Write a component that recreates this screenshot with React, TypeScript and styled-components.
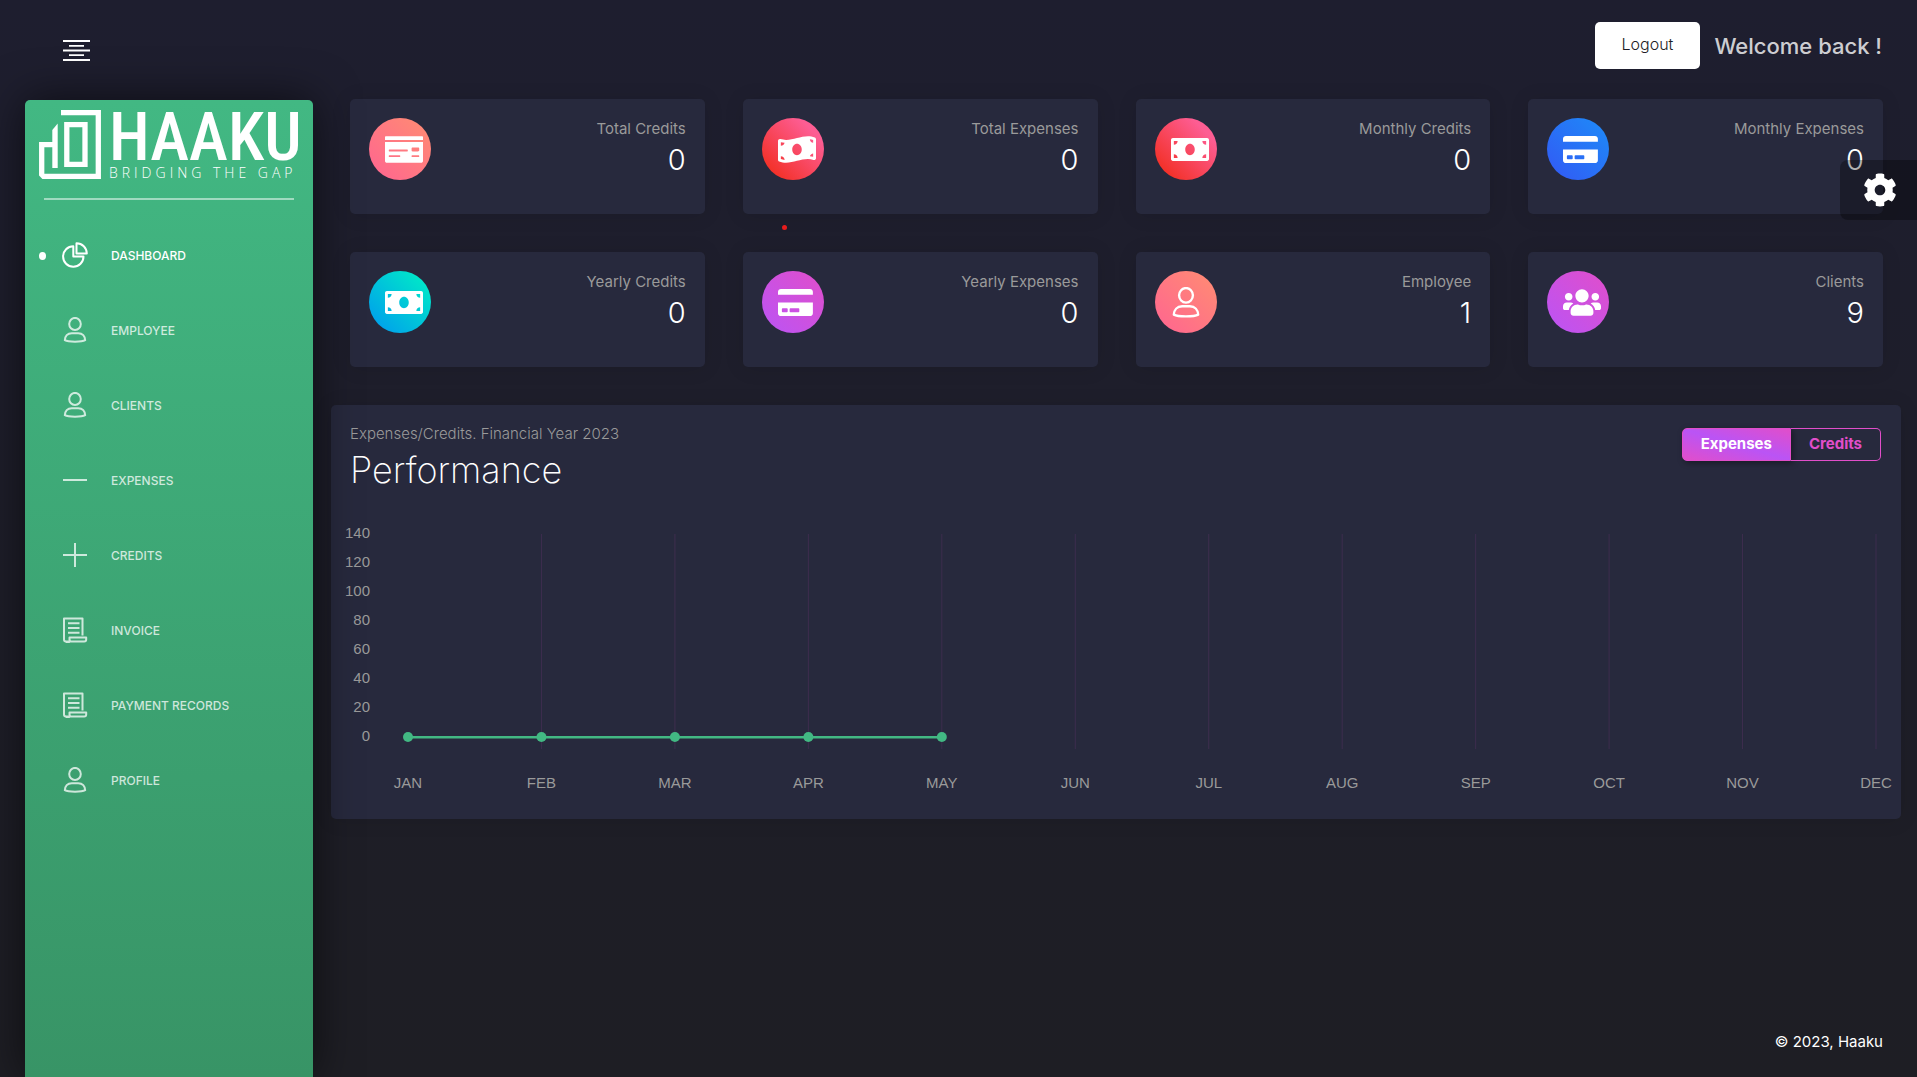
import React, { useState } from "react";
import styled, { createGlobalStyle, css } from "styled-components";
import { FaCog, FaCreditCard, FaMoneyBill, FaMoneyBillWave, FaMoneyCheck, FaUsers } from "react-icons/fa";

const GlobalStyle = createGlobalStyle`
  *, *::before, *::after { box-sizing: border-box; }
  body {
    margin: 0;
    background: #1e1e24;
    color: #fff;
    font-family: Inter, "Open Sans", sans-serif;
    font-size: 15px;
    line-height: 20px;
  }
  button { font-family: inherit; cursor: pointer; }
`;

const Page = styled.div`
  position: relative;
  display: flex;
  flex-direction: column;
  min-height: 100vh;
  background: linear-gradient(#1e1e2f, #1e1e24);
  overflow: hidden;
`;

const Header = styled.header`
  display: flex;
  align-items: flex-start;
  justify-content: space-between;
  height: 100px;
  padding: 22px 35px 0 63px;
`;

const MenuButton = styled.button`
  display: flex;
  margin-top: 18px;
  padding: 0;
  border: 0;
  background: none;
  color: #fff;
`;

const Account = styled.div`
  display: flex;
  align-items: flex-start;
  gap: 14px;
`;

const Logout = styled.button`
  height: 47px;
  padding: 0 27px 4px;
  border: 0;
  border-radius: 5px;
  background: #fff;
  color: #1d1d26;
  font-size: 16px;
  font-weight: 300;
`;

const Welcome = styled.p`
  margin: 0;
  color: rgba(255, 255, 255, 0.8);
  font-size: 22px;
  font-weight: 500;
  line-height: 48px;
`;

const Body = styled.div`
  display: flex;
  flex: 1;
`;

const Sidebar = styled.aside`
  z-index: 1;
  flex: none;
  width: 288px;
  margin-left: 25px;
  border-radius: 5px 5px 0 0;
  background: linear-gradient(#42b883, #389466);
  box-shadow: 0 0 45px rgba(0, 0, 0, 0.6);
`;

const Brand = styled.a`
  display: flex;
  gap: 8px;
  padding: 10px 14px 17px;
  color: #fff;
  text-decoration: none;
  white-space: nowrap;
  svg { flex: none; }
`;

const BrandText = styled.span`
  display: flex;
  flex-direction: column;
`;

const BrandName = styled.span`
  font-family: "Roboto Condensed", "Liberation Sans Narrow", Roboto, sans-serif;
  font-size: 66px;
  font-weight: 500;
  line-height: 55px;
`;

const Tagline = styled.span`
  font-family: "Open Sans", sans-serif;
  font-size: 14px;
  font-weight: 300;
  line-height: 16px;
  letter-spacing: 4px;
`;

const Divider = styled.hr`
  height: 2px;
  margin: 0 19px;
  border: 0;
  background: rgba(255, 255, 255, 0.5);
`;

const NavList = styled.ul`
  margin: 0;
  padding: 18px 0 0;
  list-style: none;
`;

const NavLink = styled.a<{ $active?: boolean }>`
  display: grid;
  grid-template-columns: 8px 26px 1fr;
  align-items: center;
  column-gap: 15px;
  height: 75px;
  padding-left: 14px;
  color: rgba(255, 255, 255, ${(p) => (p.$active ? 1 : 0.75)});
  font-size: 12px;
  font-weight: 500;
  text-decoration: none;
  &::before {
    content: "";
    width: 7px;
    height: 8px;
    border-radius: 50%;
    background: ${(p) => (p.$active ? "#fff" : "transparent")};
  }
  svg { margin-bottom: 2px; }
  span { padding-left: 8px; }
`;

const Main = styled.main`
  display: flex;
  flex: 1;
  flex-direction: column;
  min-width: 0;
  padding: 0 16px 0 18px;
`;

const Stats = styled.section`
  display: grid;
  grid-template-columns: repeat(4, 1fr);
  gap: 38px;
  padding: 0 18px 0 19px;
  margin-top: -1px;
`;

const surface = css`
  border-radius: 5px;
  background: #27293d;
  box-shadow: 0 1px 20px rgba(0, 0, 0, 0.1);
`;

const StatCard = styled.article`
  ${surface}
  display: flex;
  justify-content: space-between;
  height: 115px;
  padding: 19px;
`;

const tones = {
  coral: "#ff6491, #ff8d72",
  red: "#f12711, #fd5d93 80%",
  blue: "#3358f4, #1d8cf8",
  teal: "#0098f0, #00f2c3",
  purple: "#ba54f5, #e14eca",
};

const Badge = styled.span<{ $tone: keyof typeof tones; $center?: boolean }>`
  display: flex;
  align-items: center;
  justify-content: ${(p) => (p.$center ? "center" : "flex-start")};
  width: 62px;
  height: 62px;
  padding-left: ${(p) => (p.$center ? 0 : 16)}px;
  border-radius: 50%;
  background: linear-gradient(to top right, ${(p) => tones[p.$tone]});
  color: #fff;
  svg { flex: none; width: 38px; height: 31px; }
`;

const Figures = styled.div`
  padding-top: 1px;
  text-align: right;
`;

const StatLabel = styled.p`
  margin: 0;
  color: #9a9a9a;
`;

const StatValue = styled.p`
  margin: 5px 0 0;
  font-size: 29px;
  font-weight: 300;
  line-height: 32px;
`;

const Panel = styled.section`
  ${surface}
  margin-top: 38px;
  padding-bottom: 26px;
`;

const PanelHead = styled.div`
  display: flex;
  align-items: flex-start;
  justify-content: space-between;
  padding: 19px 20px 0 19px;
`;

const PanelNote = styled.p`
  margin: 0;
  color: #9a9a9a;
  font-weight: 300;
`;

const PanelTitle = styled.h2`
  margin: 4px 0 0;
  font-size: 36px;
  font-weight: 200;
  line-height: 44px;
`;

const Toggle = styled.div`
  display: flex;
  margin-top: 4px;
`;

const ToggleButton = styled.button<{ $on: boolean }>`
  height: 33px;
  padding: 0 18px 2px;
  border: 1px solid #e14eca;
  background: ${(p) => (p.$on ? "linear-gradient(to bottom left, #e14eca, #ba54f5, #e14eca)" : "transparent")};
  box-shadow: ${(p) => (p.$on ? "2px 2px 6px rgba(0, 0, 0, 0.4)" : "none")};
  color: ${(p) => (p.$on ? "#fff" : "#e14eca")};
  font-size: 15px;
  font-weight: 700;
  &:first-child { border-radius: 5px 0 0 5px; }
  &:last-child { border-left: 0; border-radius: 0 5px 5px 0; }
`;

const ChartArea = styled.div`
  padding: 39px 25px 0 77px;
`;

const Chart = styled.svg`
  display: block;
  width: 100%;
  height: 262px;
  overflow: visible;
  text {
    fill: #9a9a9a;
    font-family: "Liberation Sans", Arial, sans-serif;
    font-size: 15px;
  }
  .grid { stroke: rgba(225, 78, 202, 0.12); }
  .line { stroke: #42b883; stroke-width: 2; }
  .glow { stroke: #42b883; stroke-opacity: 0.5; }
  circle { fill: #42b883; }
`;

const Footer = styled.footer`
  margin-top: auto;
  padding: 32px 18px 25px;
  font-size: 15px;
  text-align: right;
`;

const SettingsTab = styled.button`
  position: absolute;
  z-index: 2;
  top: 160px;
  right: 0;
  display: flex;
  align-items: center;
  justify-content: center;
  width: 77px;
  height: 60px;
  padding: 0 0 0 3px;
  border: 0;
  border-radius: 8px 0 0 8px;
  background: rgba(0, 0, 0, 0.3);
  color: #fff;
`;

const Marker = styled.span`
  position: absolute;
  top: 225px;
  left: 782px;
  width: 5px;
  height: 5px;
  border-radius: 50%;
  background: #e81c1c;
`;

const Stroke = ({ children }: { children: React.ReactNode }) => (
  <svg width="26" height="26" viewBox="0 0 26 26" fill="none" stroke="currentColor" strokeWidth="2" strokeLinejoin="round" strokeLinecap="butt" aria-hidden="true">
    {children}
  </svg>
);

const UserIcon = () => (
  <Stroke>
    <ellipse cx="13" cy="7" rx="5.8" ry="6.100" />
    <path d="M9.800 16.200h6.400c4.400 0 6.800 3.200 7 7-3.400 1.900-17 1.900-20.400 0 .2-3.800 2.600-7 7-7z" />
  </Stroke>
);
const PieIcon = () => (
  <Stroke>
    <path d="M11.300 4.300A10.200 10.200 0 1 0 21.500 14.500H11.300z" />
    <path d="M14.500 1.200v10.300h10.300A10.300 10.300 0 0 0 14.500 1.200z" />
  </Stroke>
);
const MinusIcon = () => <Stroke><path d="M1 13h24" /></Stroke>;
const PlusIcon = () => <Stroke><path d="M1 13h24M13 1v24" /></Stroke>;
const PaperIcon = () => (
  <Stroke>
    <path d="M20.500 18.500V1.500H2v21a2 2 0 0 0 2 2h18.200a2 2 0 0 0 2-2V20.500H7.500v2.200a1.800 1.800 0 0 1-3.500 1.800" />
    <path d="M6 6.200h11.500M6 11h11.500M6 15.800h11.500" />
  </Stroke>
);

const LogoMark = () => (
  <svg width="62" height="69" viewBox="0 0 62 69" fill="none" stroke="#fff" strokeWidth="5.300" aria-hidden="true">
    <path d="M22 2.700H59.300V66.300H4.500L2.700 64.500V34.700H15" />
    <path d="M13.300 58V20L18.700 13.500V58z" fill="#fff" stroke="none" />
    <path d="M27.800 14.700H46V54.300H27.800z" />
  </svg>
);

const navItems: [string, () => React.ReactNode][] = [
  ["DASHBOARD", PieIcon],
  ["EMPLOYEE", UserIcon],
  ["CLIENTS", UserIcon],
  ["EXPENSES", MinusIcon],
  ["CREDITS", PlusIcon],
  ["INVOICE", PaperIcon],
  ["PAYMENT RECORDS", PaperIcon],
  ["PROFILE", UserIcon],
];

const stats: { label: string; value: number; tone: keyof typeof tones; icon: React.ReactNode; center?: boolean }[] = [
  { label: "Total Credits", value: 0, tone: "coral", icon: <FaMoneyCheck /> },
  { label: "Total Expenses", value: 0, tone: "red", icon: <FaMoneyBillWave /> },
  { label: "Monthly Credits", value: 0, tone: "red", icon: <FaMoneyBill /> },
  { label: "Monthly Expenses", value: 0, tone: "blue", icon: <FaCreditCard preserveAspectRatio="xMinYMid" /> },
  { label: "Yearly Credits", value: 0, tone: "teal", icon: <FaMoneyBill /> },
  { label: "Yearly Expenses", value: 0, tone: "purple", icon: <FaCreditCard preserveAspectRatio="xMinYMid" /> },
  { label: "Employee", value: 1, tone: "coral", icon: <UserIcon />, center: true },
  { label: "Clients", value: 9, tone: "purple", icon: <FaUsers /> },
];

const months = ["JAN", "FEB", "MAR", "APR", "MAY", "JUN", "JUL", "AUG", "SEP", "OCT", "NOV", "DEC"];
const ticks = [140, 120, 100, 80, 60, 40, 20, 0];
const series = { Expenses: [0, 0, 0, 0, 0], Credits: [0, 0, 0, 0, 0] };

const monthX = (i: number) => `${(i * 100) / (months.length - 1)}%`;
const valueY = (v: number) => 206 - (v * 203) / 140;

function PerformanceChart({ values }: { values: number[] }) {
  return (
    <Chart role="img" aria-label="Performance by month">
      {months.map((m, i) => (
        <React.Fragment key={m}>
          {i > 0 && <line className="grid" x1={monthX(i)} x2={monthX(i)} y1="3" y2="218" />}
          <text x={monthX(i)} y="257" textAnchor="middle">{m}</text>
        </React.Fragment>
      ))}
      {ticks.map((t) => (
        <text key={t} x="-38" y={valueY(t) + 4} textAnchor="end">{t}</text>
      ))}
      {values.slice(1).map((v, i) => (
        <React.Fragment key={i}>
          <line className="line" x1={monthX(i)} x2={monthX(i + 1)} y1={valueY(values[i])} y2={valueY(v)} />
          <line className="glow" x1={monthX(i)} x2={monthX(i + 1)} y1={valueY(values[i]) + 1.5} y2={valueY(v) + 1.5} />
        </React.Fragment>
      ))}
      {values.map((v, i) => <circle key={i} cx={monthX(i)} cy={valueY(v)} r="5" />)}
    </Chart>
  );
}

export default function App() {
  const [mode, setMode] = useState<keyof typeof series>("Expenses");
  return (
    <Page>
      <GlobalStyle />
      <Header>
        <MenuButton aria-label="Toggle menu">
          <svg width="27" height="21" viewBox="0 0 27 21" stroke="currentColor" strokeWidth="1.800" aria-hidden="true">
            <path d="M0 1h27M6 5.800h15M0 10.500h27M6 15.200h15M0 20h27" />
          </svg>
        </MenuButton>
        <Account>
          <Logout>Logout</Logout>
          <Welcome>Welcome back !</Welcome>
        </Account>
      </Header>
      <Body>
        <Sidebar>
          <Brand href="#">
            <LogoMark />
            <BrandText>
              <BrandName>HAAKU</BrandName>
              <Tagline>BRIDGING THE GAP</Tagline>
            </BrandText>
          </Brand>
          <Divider />
          <nav>
            <NavList>
              {navItems.map(([label, Icon], i) => (
                <li key={label}>
                  <NavLink href="#" $active={i === 0}>
                    <Icon />
                    <span>{label}</span>
                  </NavLink>
                </li>
              ))}
            </NavList>
          </nav>
        </Sidebar>
        <Main>
          <Stats>
            {stats.map((s) => (
              <StatCard key={s.label}>
                <Badge $tone={s.tone} $center={s.center}>{s.icon}</Badge>
                <Figures>
                  <StatLabel>{s.label}</StatLabel>
                  <StatValue>{s.value}</StatValue>
                </Figures>
              </StatCard>
            ))}
          </Stats>
          <Panel>
            <PanelHead>
              <div>
                <PanelNote>Expenses/Credits. Financial Year 2023</PanelNote>
                <PanelTitle>Performance</PanelTitle>
              </div>
              <Toggle role="group" aria-label="Series">
                {(["Expenses", "Credits"] as const).map((m) => (
                  <ToggleButton key={m} $on={mode === m} aria-pressed={mode === m} onClick={() => setMode(m)}>{m}</ToggleButton>
                ))}
              </Toggle>
            </PanelHead>
            <ChartArea>
              <PerformanceChart values={series[mode]} />
            </ChartArea>
          </Panel>
          <Footer>© 2023, Haaku</Footer>
        </Main>
      </Body>
      <Marker />
      <SettingsTab aria-label="Settings"><FaCog size={34} /></SettingsTab>
    </Page>
  );
}
